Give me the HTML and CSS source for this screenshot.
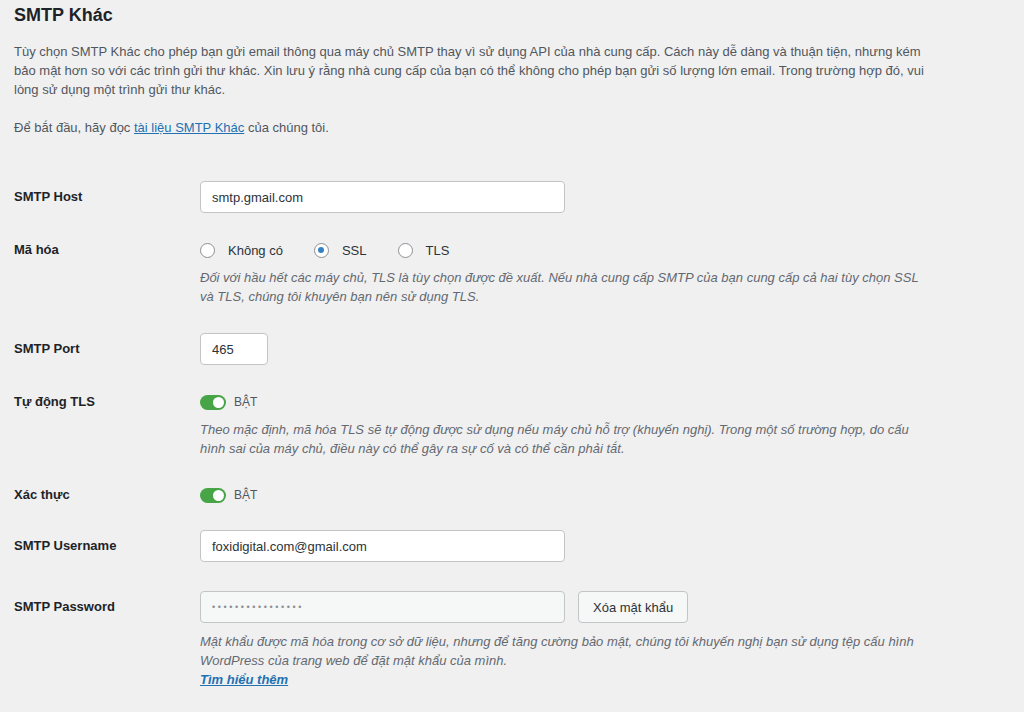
FILE: index.html
```html
<!DOCTYPE html>
<html lang="vi">
<head>
<meta charset="utf-8">
<title>SMTP Khác</title>
<link rel="stylesheet" href="styles.css">
</head>
<body>
<div class="page">
  <h2 class="title">SMTP Khác</h2>
  <p class="intro">Tùy chọn SMTP Khác cho phép bạn gửi email thông qua máy chủ SMTP thay vì sử dụng API của nhà cung cấp. Cách này dễ dàng và thuận tiện, nhưng kém bảo mật hơn so với các trình gửi thư khác. Xin lưu ý rằng nhà cung cấp của bạn có thể không cho phép bạn gửi số lượng lớn email. Trong trường hợp đó, vui lòng sử dụng một trình gửi thư khác.</p>
  <p class="intro">Để bắt đầu, hãy đọc <a href="#">tài liệu SMTP Khác</a> của chúng tôi.</p>

  <div class="rows">
    <div class="row row-input">
      <div class="label">SMTP Host</div>
      <div class="field"><input class="text wide" type="text" value="smtp.gmail.com"></div>
    </div>

    <div class="row row-line">
      <div class="label">Mã hóa</div>
      <div class="field">
        <div class="radios">
          <label class="radio"><span class="dot"></span>Không có</label>
          <label class="radio"><span class="dot on"></span>SSL</label>
          <label class="radio"><span class="dot"></span>TLS</label>
        </div>
        <p class="desc">Đối với hầu hết các máy chủ, TLS là tùy chọn được đề xuất. Nếu nhà cung cấp SMTP của bạn cung cấp cả hai tùy chọn SSL và TLS, chúng tôi khuyên bạn nên sử dụng TLS.</p>
      </div>
    </div>

    <div class="row row-input">
      <div class="label">SMTP Port</div>
      <div class="field"><input class="text port" type="text" value="465"></div>
    </div>

    <div class="row row-line">
      <div class="label">Tự động TLS</div>
      <div class="field">
        <div class="toggle-line"><span class="toggle"><span class="knob"></span></span><span class="toggle-text">BẬT</span></div>
        <p class="desc">Theo mặc định, mã hóa TLS sẽ tự động được sử dụng nếu máy chủ hỗ trợ (khuyến nghị). Trong một số trường hợp, do cấu hình sai của máy chủ, điều này có thể gây ra sự cố và có thể cần phải tắt.</p>
      </div>
    </div>

    <div class="row row-line">
      <div class="label">Xác thực</div>
      <div class="field">
        <div class="toggle-line"><span class="toggle"><span class="knob"></span></span><span class="toggle-text">BẬT</span></div>
      </div>
    </div>

    <div class="row row-input row-user">
      <div class="label">SMTP Username</div>
      <div class="field"><input class="text wide" type="text" value="foxidigital.com@gmail.com"></div>
    </div>

    <div class="row row-input row-pass">
      <div class="label">SMTP Password</div>
      <div class="field">
        <div class="pass-line">
          <input class="text wide pass" type="text" value="••••••••••••••••" readonly>
          <button class="btn" type="button">Xóa mật khẩu</button>
        </div>
        <p class="desc">Mật khẩu được mã hóa trong cơ sở dữ liệu, nhưng để tăng cường bảo mật, chúng tôi khuyến nghị bạn sử dụng tệp cấu hình WordPress của trang web để đặt mật khẩu của mình.<br><a href="#" class="more">Tìm hiểu thêm</a></p>
      </div>
    </div>
  </div>
</div>
</body>
</html>
```

FILE: styles.css
```css
html, body {
  margin: 0;
  padding: 0;
  background: #f0f0f1;
}
body {
  font-family: "Liberation Sans", Arial, sans-serif;
  font-size: 13px;
  line-height: 19px;
  color: #50575e;
}
.page {
  width: 912px;
  padding: 0 0 0 14px;
}
.title {
  margin: 4px 0 0;
  font-size: 18px;
  line-height: 22px;
  font-weight: 700;
  color: #1d2327;
}
.intro {
  margin: 16px 0 0;
}
.intro + .intro {
  margin-top: 19px;
}
a {
  color: #2271b1;
  text-decoration: underline;
}
.rows {
  display: flex;
  flex-direction: column;
  gap: 27px;
  margin-top: 44px;
}
.row {
  display: grid;
  grid-template-columns: 186px 1fr;
}
.row-user {
  margin-top: -2px;
}
.row-pass {
  margin-top: 2px;
}
.label {
  font-weight: 700;
  color: #1d2327;
}
.row-input .label {
  line-height: 32px;
}
.row-line .label {
  line-height: 20px;
}
.text {
  box-sizing: border-box;
  height: 32px;
  border: 1px solid #c3c4c7;
  border-radius: 4px;
  background: #fff;
  padding: 0 11px;
  font: inherit;
  color: #2c3338;
  margin: 0;
  display: block;
}
.wide { width: 365px; }
.port { width: 68px; }
.pass {
  background: #f6f7f7;
  color: #8c8f94;
  letter-spacing: 2.6px;
  font-size: 9px;
}
.radios {
  display: flex;
  align-items: center;
  height: 20px;
}
.radio {
  display: flex;
  align-items: center;
  color: #2c3338;
  margin-right: 31px;
}
.dot {
  box-sizing: border-box;
  width: 15px;
  height: 15px;
  border: 1px solid #8c8f94;
  border-radius: 50%;
  background: #fff;
  margin-right: 13px;
  display: flex;
  align-items: center;
  justify-content: center;
}
.dot.on::after {
  content: "";
  width: 6px;
  height: 6px;
  border-radius: 50%;
  background: #3582c4;
}
.desc {
  margin: 8px 0 0;
  font-style: italic;
  color: #646970;
}
.toggle-line {
  display: flex;
  align-items: center;
  height: 20px;
}
.toggle {
  box-sizing: border-box;
  width: 26px;
  height: 15px;
  border-radius: 8px;
  background: #47a447;
  display: flex;
  align-items: center;
  justify-content: flex-end;
  padding-right: 2px;
  margin-right: 8px;
}
.knob {
  width: 11px;
  height: 11px;
  border-radius: 50%;
  background: #fff;
}
.toggle-text {
  font-size: 12px;
  color: #50575e;
}
.pass-line {
  display: flex;
  gap: 13px;
}
.btn {
  box-sizing: border-box;
  height: 32px;
  padding: 0 14px;
  border: 1px solid #c3c4c7;
  border-radius: 4px;
  background: #f6f7f7;
  font: inherit;
  color: #2c3338;
}
.pass-line + .desc {
  margin-top: 9px;
}
.more {
  font-weight: 700;
}
```
